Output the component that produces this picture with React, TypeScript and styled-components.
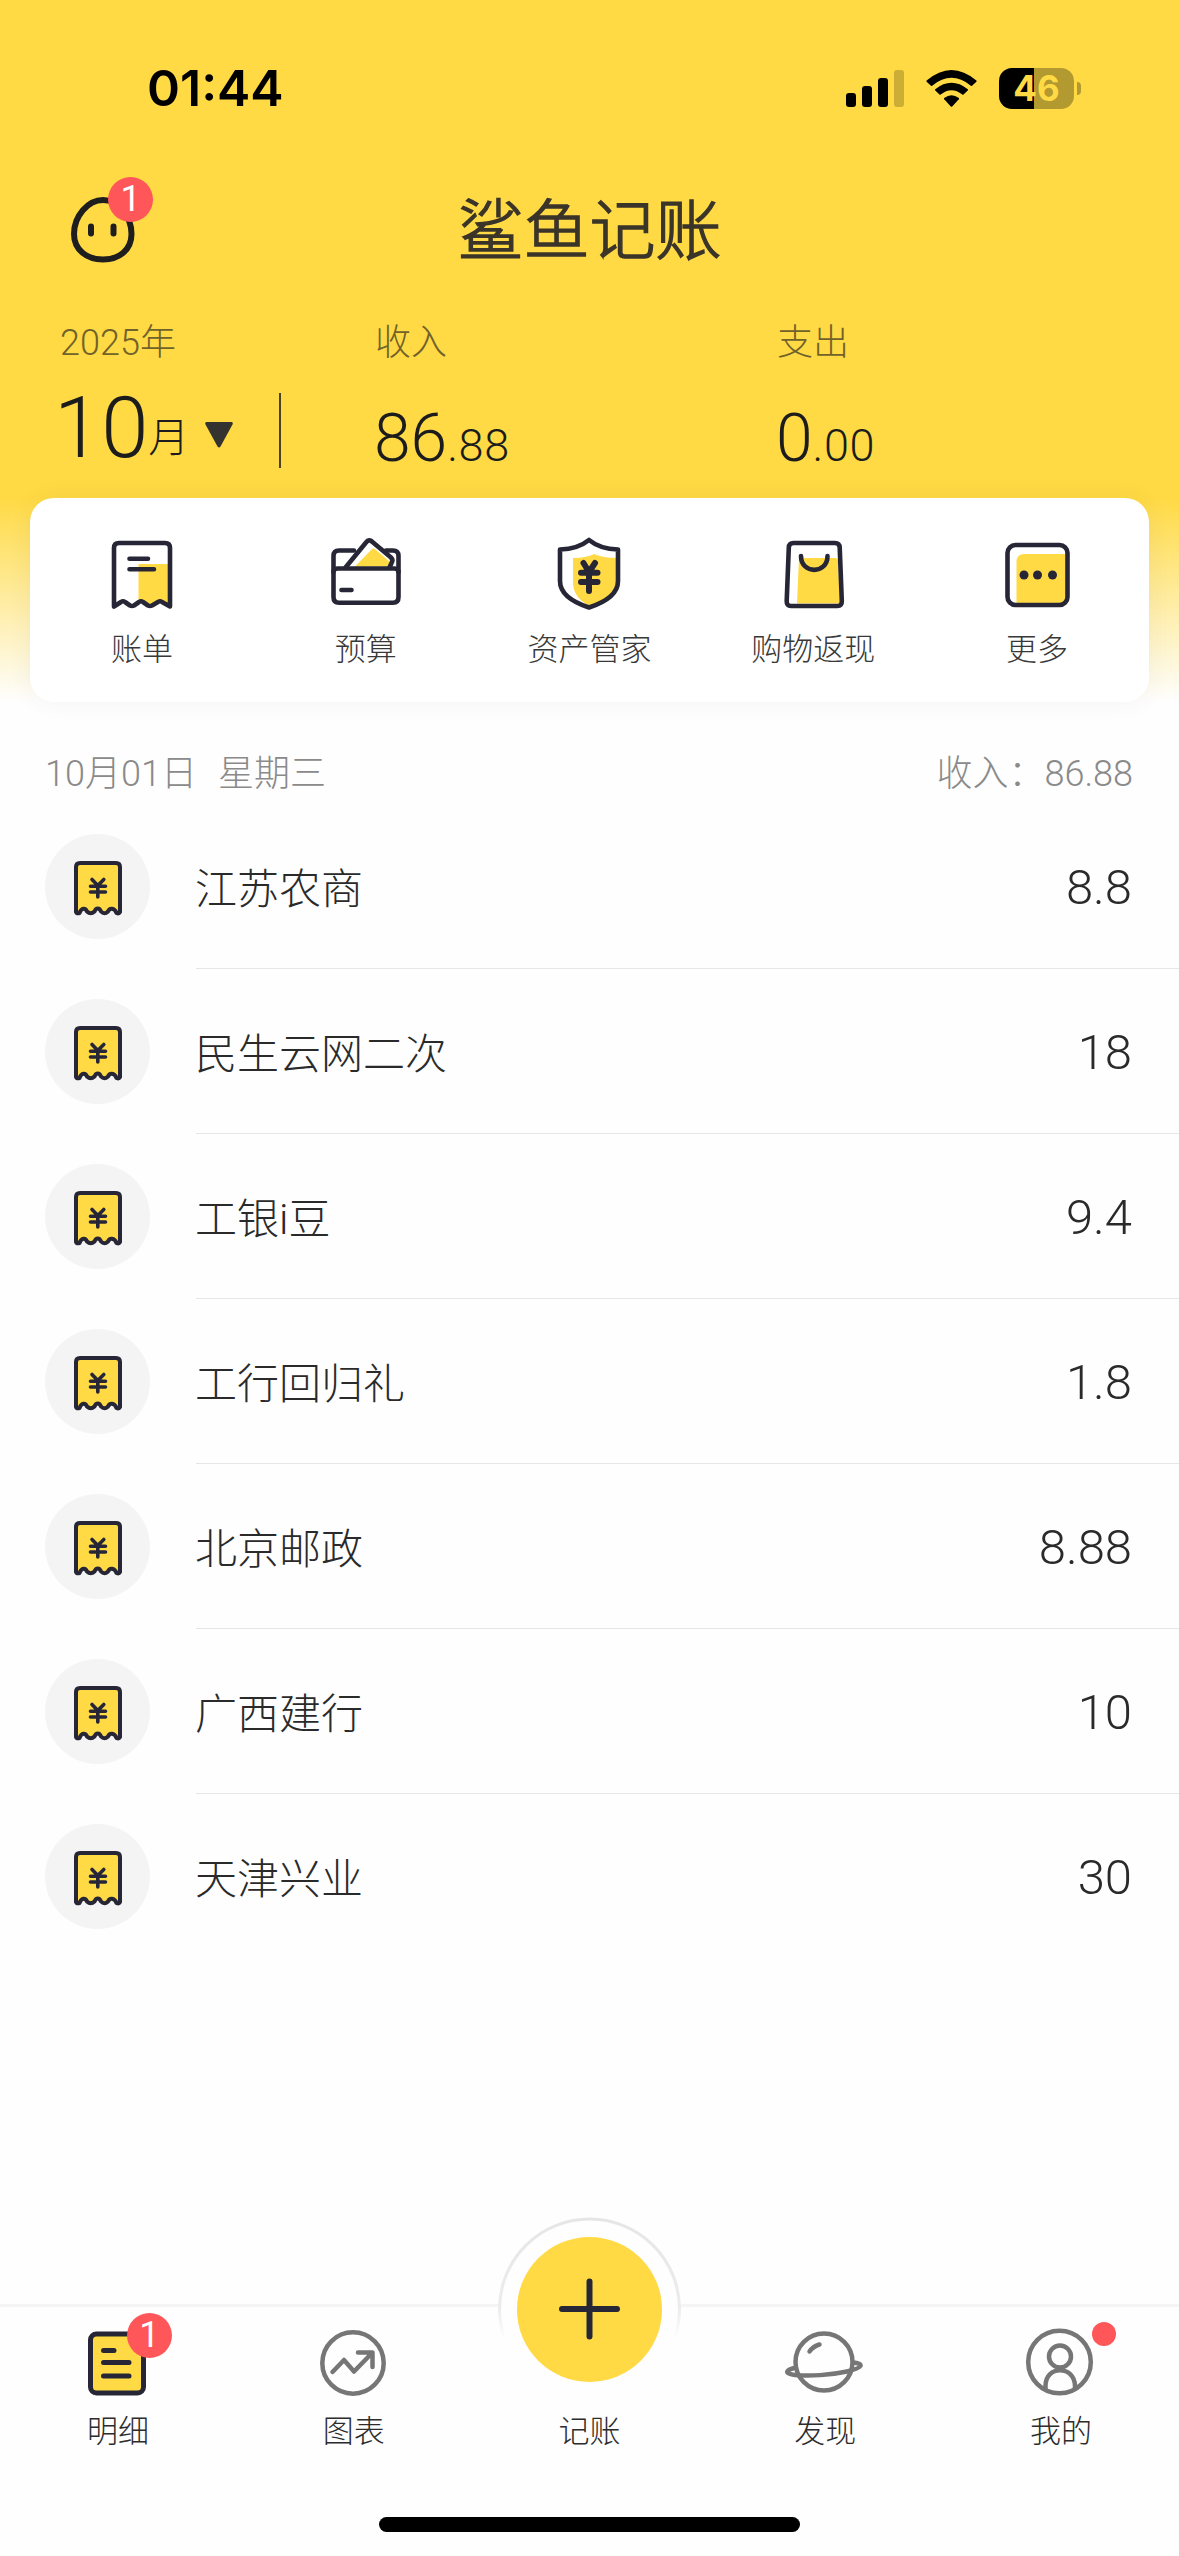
import React from "react";
import styled, { createGlobalStyle } from "styled-components";

const YELLOW = "#ffda44";
const INK = "#272636";
const GREY = "#777676";

const GlobalStyle = createGlobalStyle`
  * { box-sizing: border-box; }
  body {
    margin: 0;
    background: #fefefe;
    font-family: Roboto, "Noto Sans CJK SC", sans-serif;
    font-weight: 300;
    color: #1c1c1c;
  }
  svg { display: block; overflow: visible; }
`;

const Screen = styled.div`
  width: 1179px;
  height: 2556px;
  display: flex;
  flex-direction: column;
  overflow: hidden;
`;

const Header = styled.header`
  height: 702px;
  flex: none;
  display: flex;
  flex-direction: column;
  background: linear-gradient(${YELLOW} 0, ${YELLOW} 498px, #fefefe 702px);
`;

const StatusBar = styled.div`
  height: 176px;
  padding: 0 98px 0 147px;
  display: flex;
  align-items: center;
  justify-content: space-between;
`;

const Clock = styled.span`
  font: 600 50px/60px Inter, sans-serif;
  letter-spacing: 0;
  color: #000;
`;

const StatusIcons = styled.div`
  display: flex;
  align-items: center;
  gap: 22px;
`;

const Battery = styled.div`
  display: flex;
  align-items: center;
  gap: 3px;
`;

const BatteryBody = styled.div`
  width: 75px;
  height: 41px;
  border-radius: 13px;
  background: linear-gradient(90deg, #000 35px, #b29930 35px);
  display: flex;
  align-items: center;
  justify-content: center;
  font: 700 35px/41px Inter, sans-serif;
  color: ${YELLOW};
`;

const BatteryTip = styled.div`
  width: 4px;
  height: 13px;
  border-radius: 0 6px 6px 0;
  background: #b29930;
`;

const TitleBar = styled.div`
  height: 108px;
  padding: 0 71px;
  display: grid;
  grid-template-columns: 64px 1fr 64px;
  align-items: center;
`;

const Avatar = styled.button`
  position: relative;
  width: 64px;
  height: 66px;
  padding: 0;
  border: 0;
  background: none;
`;

const Badge = styled.span<{ $left: number; $top: number }>`
  position: absolute;
  left: ${(p) => p.$left}px;
  top: ${(p) => p.$top}px;
  width: 45px;
  height: 45px;
  border-radius: 50%;
  background: #ff5759;
  color: #fff;
  font: 400 36px/45px Roboto, sans-serif;
  text-align: center;
`;

const AppTitle = styled.h1`
  margin: 0;
  padding-top: 4px;
  font-size: 66px;
  line-height: 80px;
  font-weight: 300;
  text-align: center;
  color: #3b3529;
  -webkit-text-stroke: 1.5px #3b3529;
`;

const Summary = styled.section`
  height: 214px;
  padding: 35px 60px 0;
  display: grid;
  grid-template-columns: 219px 96px 402px 1fr;
`;

const Caption = styled.div`
  height: 48px;
  font-size: 36px;
  line-height: 48px;
  color: #71622b;
  white-space: nowrap;
`;

const MonthValue = styled.div`
  margin-top: 24px;
  height: 75px;
  display: flex;
  align-items: baseline;
  font-size: 85px;
  line-height: 75px;
  margin-left: -6px;
`;

const MonthUnit = styled.span`
  font-size: 41px;
  margin: 0 16px 0 0;
  padding-bottom: 3px;
  align-self: flex-end;
  line-height: 50px;
`;

const Divider = styled.div`
  width: 2px;
  height: 75px;
  margin-top: 74px;
  background: #4a4226;
`;

const Amount = styled.div`
  margin-top: 32px;
  height: 80px;
  font-size: 66px;
  line-height: 80px;
  margin-left: -1px;
  small {
    font-size: 45px;
    letter-spacing: 0.6px;
  }
`;

const Card = styled.nav`
  height: 204px;
  margin: 0 30px;
  flex: none;
  border-radius: 24px;
  background: #fff;
  box-shadow: 0 0 24px rgba(60, 60, 90, 0.06);
  display: grid;
  grid-template-columns: repeat(5, 1fr);
`;

const Shortcut = styled.button`
  border: 0;
  padding: 36px 0 0;
  background: none;
  display: flex;
  flex-direction: column;
  align-items: center;
  gap: 10px;
  font: 300 31px/46px "Noto Sans CJK SC", sans-serif;
  color: #383838;
`;

const DayHeader = styled.div`
  height: 102px;
  padding: 42px 46px 0 45px;
  flex: none;
  display: flex;
  justify-content: space-between;
  font-size: 36px;
  line-height: 60px;
  color: #8a8a8a;
`;

const DayDate = styled.span`
  display: flex;
  gap: 21px;
`;

const List = styled.main`
  flex: 1;
`;

const Row = styled.div`
  height: 165px;
  padding-left: 45px;
  display: grid;
  grid-template-columns: 105px 1fr;
  column-gap: 46px;
  align-items: center;
`;

const RowIcon = styled.div`
  width: 105px;
  height: 105px;
  border-radius: 50%;
  background: #f4f4f4;
`;

const RowBody = styled.div<{ $last: boolean }>`
  height: 165px;
  padding-right: 47px;
  border-bottom: 1px solid ${(p) => (p.$last ? "transparent" : "#e6e6e6")};
  display: flex;
  align-items: center;
  justify-content: space-between;
  color: #2a2a2a;
`;

const RowName = styled.span`
  font-size: 42px;
  margin-left: -1px;
  padding-bottom: 2px;
`;

const RowAmount = styled.span`
  font-size: 49px;
  padding-top: 3px;
`;

const TabBar = styled.footer`
  height: 252px;
  flex: none;
  border-top: 3px solid #f5f5f5;
  background: #fefefe;
  display: flex;
  flex-direction: column;
  align-items: center;
  justify-content: space-between;
  padding-bottom: 24px;
`;

const Tabs = styled.div`
  width: 100%;
  display: grid;
  grid-template-columns: repeat(5, 1fr);
`;

const Tab = styled.button`
  border: 0;
  padding: 16px 0 0;
  background: none;
  display: flex;
  flex-direction: column;
  align-items: center;
  gap: 3px;
  font: 300 31px/46px "Noto Sans CJK SC", sans-serif;
  color: #2c2c2c;
`;

const TabIcon = styled.div`
  position: relative;
  width: 80px;
  height: 80px;
  display: flex;
  align-items: flex-start;
  justify-content: center;
`;

const AddButton = styled.div`
  position: absolute;
  left: -52px;
  top: -106px;
  width: 184px;
  height: 184px;
`;

const Dot = styled.span`
  position: absolute;
  left: 71px;
  top: -1px;
  width: 24px;
  height: 24px;
  border-radius: 50%;
  background: #ff5759;
`;

const HomeIndicator = styled.div`
  width: 421px;
  height: 15px;
  border-radius: 8px;
  background: #000;
`;

const Line = styled.g<{ $w?: number; $c?: string }>`
  fill: none;
  stroke: ${(p) => p.$c ?? INK};
  stroke-width: ${(p) => p.$w ?? 4.6};
  stroke-linecap: round;
  stroke-linejoin: round;
`;

const Signal = () => (
  <svg width="58" height="37">
    <rect y="23" width="10" height="14" rx="3" />
    <rect x="16" y="16" width="10" height="21" rx="3" />
    <rect x="32" y="8" width="10" height="29" rx="3" />
    <rect x="48" width="10" height="37" rx="3" fill="#ccae37" />
  </svg>
);

const Wifi = () => (
  <svg width="51" height="37" viewBox="0 0 51 37">
    <path d="M0.6 10.6Q25.5 -10.6 50.4 10.6Q50.9 11.2 50.4 11.8L46 15.7Q45.4 16.1 44.8 15.7Q25.5 0 6.2 15.7Q5.6 16.1 5 15.7L0.6 11.8Q0.1 11.2 0.6 10.6Z" />
    <path d="M9.2 19.2Q25.5 6.3 41.8 19.2Q42.3 19.8 41.8 20.4L37.5 24.6Q36.9 25 36.3 24.6Q25.5 16 14.7 24.6Q14.1 25 13.5 24.6L9.2 20.4Q8.7 19.8 9.2 19.2Z" />
    <path d="M18.2 28Q25.5 22.7 32.8 28Q33.3 28.6 32.8 29.2L26.2 36.4Q25.5 37 24.8 36.4L18.2 29.2Q17.7 28.6 18.2 28Z" />
  </svg>
);

const Face = () => (
  <svg width="64" height="66">
    <Line $w={6} $c="#1e1e1e">
      <path d="M32 3C47 3 60.500 19 60.500 37C60.500 53 48 62.500 32 62.500C16 62.500 3 53 3 37C3 19 17 3 32 3Z" />
      <path d="M20 29.500V36.500M42.500 29.500V36.500" />
    </Line>
  </svg>
);

const BillIcon = () => (
  <svg width="80" height="80">
    <path d="M36.500 30H68V70L58 67L48 72L39 67L36.500 69Z" fill={YELLOW} />
    <Line>
      <path d="M12 72.500V14Q12 9 17 9H63Q68 9 68 14V72.500L60 68Q58 66.500 56 68L50 71.500Q48 72.500 46 71.500L41 68Q39 66.500 37 68L32 71.500Q30 72.500 28 71.500L23 68Q21 66.500 19 68Z" />
      <path d="M27.500 24.700H46M27.500 35.200H52" />
    </Line>
  </svg>
);

const BudgetIcon = () => (
  <svg width="80" height="80">
    <path d="M45.500 15.500L29 32.500H63L64.500 28.500L49 15Q47 14 45.500 15.500Z" fill={YELLOW} />
    <Line>
      <path d="M28 16.500H13Q7.500 16.500 7.500 22V63Q7.500 68.700 13 68.700H67Q72.500 68.700 72.500 63V22Q72.500 16.500 67 16.500H60" />
      <path d="M7.500 38Q7.500 34.500 12 34.500H68Q72.500 34.500 72.500 38" />
      <path d="M19.500 33.500L40 8.500Q43 4.500 46.500 8L65 23.500Q67.500 26 65.500 29L63.500 33.500" />
      <path d="M15.500 56H25.500" />
    </Line>
  </svg>
);

const AssetIcon = () => (
  <svg width="80" height="80">
    <path d="M24 24Q37 24 45.500 20Q54 24 68 24V50Q65 64 41 72Q24 64 24 48Z" fill={YELLOW} />
    <Line>
      <path d="M40 6Q51 15 69 15.500V47Q69 64 40 73.500Q11 64 11 47V15.500Q29 15 40 6Z" />
    </Line>
    <Line $w={6}>
      <path d="M34.500 29L40 38L46 29M32 38.700H48.500M32 48H48.500M40 38V57" />
    </Line>
  </svg>
);

const BagIcon = () => (
  <svg width="80" height="80">
    <path d="M26 24H62Q65 24 65 27L67 69.500H24Z" fill={YELLOW} />
    <Line>
      <path d="M20.500 9H62Q66.500 9 66.700 13.500L68.800 67Q69 72 64.500 72H18Q13.500 72 13.700 67L15.800 13.500Q16 9 20.500 9Z" />
      <path d="M28 22C28 40.500 54.500 40.500 54.500 22" />
    </Line>
  </svg>
);

const MoreIcon = () => (
  <svg width="80" height="80">
    <path d="M19.500 28Q19.500 20 27.500 20H70V70H19.500Z" fill={YELLOW} />
    <Line>
      <rect x="10.500" y="11" width="60" height="60" rx="8" />
    </Line>
    <g fill={INK}>
      <circle cx="27" cy="41" r="4.500" />
      <circle cx="40.500" cy="41" r="4.500" />
      <circle cx="55.500" cy="41" r="4.500" />
    </g>
  </svg>
);

const ReceiptIcon = () => (
  <svg width="105" height="105">
    <Line $w={4}>
      <path
        fill={YELLOW}
        d="M31 78V33Q31 29 35 29H71Q75 29 75 33V78Q74 80 71.500 79C69.500 73.500 64.500 73.500 63 77.500Q59.300 81 56 77.500C54.500 73.500 51 73.500 49.500 77.500Q45.700 81 42 77.500C40.500 73.500 36.500 73.500 34.500 79Q31.500 80 31 78Z"
      />
    </Line>
    <Line $w={3.6}>
      <path d="M47 45.500L52.800 51.500L58.800 45.500M45.500 52.300H60.500M45.500 58H60.500M52.800 51.500V63" />
    </Line>
  </svg>
);

const DetailIcon = () => (
  <svg width="80" height="80">
    <Line $w={5}>
      <rect x="12.500" y="11" width="53" height="59" rx="6" fill={YELLOW} />
      <path d="M25.500 27.500H36M25.500 39.500H51M25.500 53H51" />
    </Line>
  </svg>
);

const ChartIcon = () => (
  <svg width="80" height="80">
    <Line $w={4.5} $c={GREY}>
      <circle cx="39" cy="40" r="30.700" />
      <path d="M18.500 49L30 37L40 48.500L58 30M44 29.500H58.500V44" />
    </Line>
  </svg>
);

const PlanetIcon = () => (
  <svg width="80" height="80">
    <Line $w={4.5} $c={GREY}>
      <circle cx="39" cy="39" r="28.500" />
      <path d="M24.500 28.500Q28 23.500 34.500 21.500" />
      <path d="M11 44.500C0 47 -1 50.500 10 52C24 53.500 46 52 62 48.500C79 44.500 79 40.500 68 39.500" />
    </Line>
  </svg>
);

const MeIcon = () => (
  <svg width="80" height="80">
    <Line $w={4.5} $c={GREY}>
      <circle cx="38.500" cy="39" r="31.300" />
      <circle cx="39" cy="33.500" r="11" />
      <path d="M24.500 66V63C24.500 42 53.500 42 54 63V66" />
    </Line>
  </svg>
);

const PlusCircle = () => (
  <svg width="184" height="184">
    <defs>
      <linearGradient id="rim" x1="0" y1="0" x2="0" y2="1">
        <stop offset="0" stopColor="#e6e6e6" />
        <stop offset="0.500" stopColor="#ececec" />
        <stop offset="0.660" stopColor="#fefefe" />
      </linearGradient>
    </defs>
    <circle cx="92.500" cy="92" r="90" fill="#fefefe" stroke="url(#rim)" strokeWidth="3" />
    <circle cx="92.500" cy="92.500" r="72.500" fill={YELLOW} />
    <Line $w={6}>
      <path d="M92.500 64.500V119.500M65 92H120" />
    </Line>
  </svg>
);

const Caret = styled.svg`
  margin-bottom: 18px;
  align-self: flex-end;
`;

const shortcuts = [
  { label: "账单", Icon: BillIcon },
  { label: "预算", Icon: BudgetIcon },
  { label: "资产管家", Icon: AssetIcon },
  { label: "购物返现", Icon: BagIcon },
  { label: "更多", Icon: MoreIcon },
];

const records = [
  ["江苏农商", "8.8"],
  ["民生云网二次", "18"],
  ["工银i豆", "9.4"],
  ["工行回归礼", "1.8"],
  ["北京邮政", "8.88"],
  ["广西建行", "10"],
  ["天津兴业", "30"],
];

export default function App() {
  return (
    <Screen>
      <GlobalStyle />
      <Header>
        <StatusBar>
          <Clock>01:44</Clock>
          <StatusIcons>
            <Signal />
            <Wifi />
            <Battery>
              <BatteryBody>46</BatteryBody>
              <BatteryTip />
            </Battery>
          </StatusIcons>
        </StatusBar>
        <TitleBar>
          <Avatar>
            <Face />
            <Badge $left={37} $top={-20}>1</Badge>
          </Avatar>
          <AppTitle>鲨鱼记账</AppTitle>
        </TitleBar>
        <Summary>
          <div>
            <Caption>2025年</Caption>
            <MonthValue>
              10<MonthUnit>月</MonthUnit>
              <Caret width="28" height="26">
                <path d="M1.500 0H26.500Q28.500 0.500 27.500 2.500L15.500 24.500Q14 26.500 12.500 24.500L0.500 2.500Q-0.500 0.500 1.500 0Z" fill="#353330" />
              </Caret>
            </MonthValue>
          </div>
          <Divider />
          <div>
            <Caption>收入</Caption>
            <Amount>86<small>.88</small></Amount>
          </div>
          <div>
            <Caption>支出</Caption>
            <Amount>0<small>.00</small></Amount>
          </div>
        </Summary>
        <Card>
          {shortcuts.map(({ label, Icon }) => (
            <Shortcut key={label}>
              <Icon />
              {label}
            </Shortcut>
          ))}
        </Card>
      </Header>
      <DayHeader>
        <DayDate>
          <span>10月01日</span>
          <span>星期三</span>
        </DayDate>
        <span>收入：86.88</span>
      </DayHeader>
      <List>
        {records.map(([name, amount], i) => (
          <Row key={name}>
            <RowIcon>
              <ReceiptIcon />
            </RowIcon>
            <RowBody $last={i === records.length - 1}>
              <RowName>{name}</RowName>
              <RowAmount>{amount}</RowAmount>
            </RowBody>
          </Row>
        ))}
      </List>
      <TabBar>
        <Tabs>
          <Tab>
            <TabIcon>
              <DetailIcon />
              <Badge $left={49} $top={-10}>1</Badge>
            </TabIcon>
            明细
          </Tab>
          <Tab>
            <TabIcon>
              <ChartIcon />
            </TabIcon>
            图表
          </Tab>
          <Tab>
            <TabIcon>
              <AddButton>
                <PlusCircle />
              </AddButton>
            </TabIcon>
            记账
          </Tab>
          <Tab>
            <TabIcon>
              <PlanetIcon />
            </TabIcon>
            发现
          </Tab>
          <Tab>
            <TabIcon>
              <MeIcon />
              <Dot />
            </TabIcon>
            我的
          </Tab>
        </Tabs>
        <HomeIndicator />
      </TabBar>
    </Screen>
  );
}
